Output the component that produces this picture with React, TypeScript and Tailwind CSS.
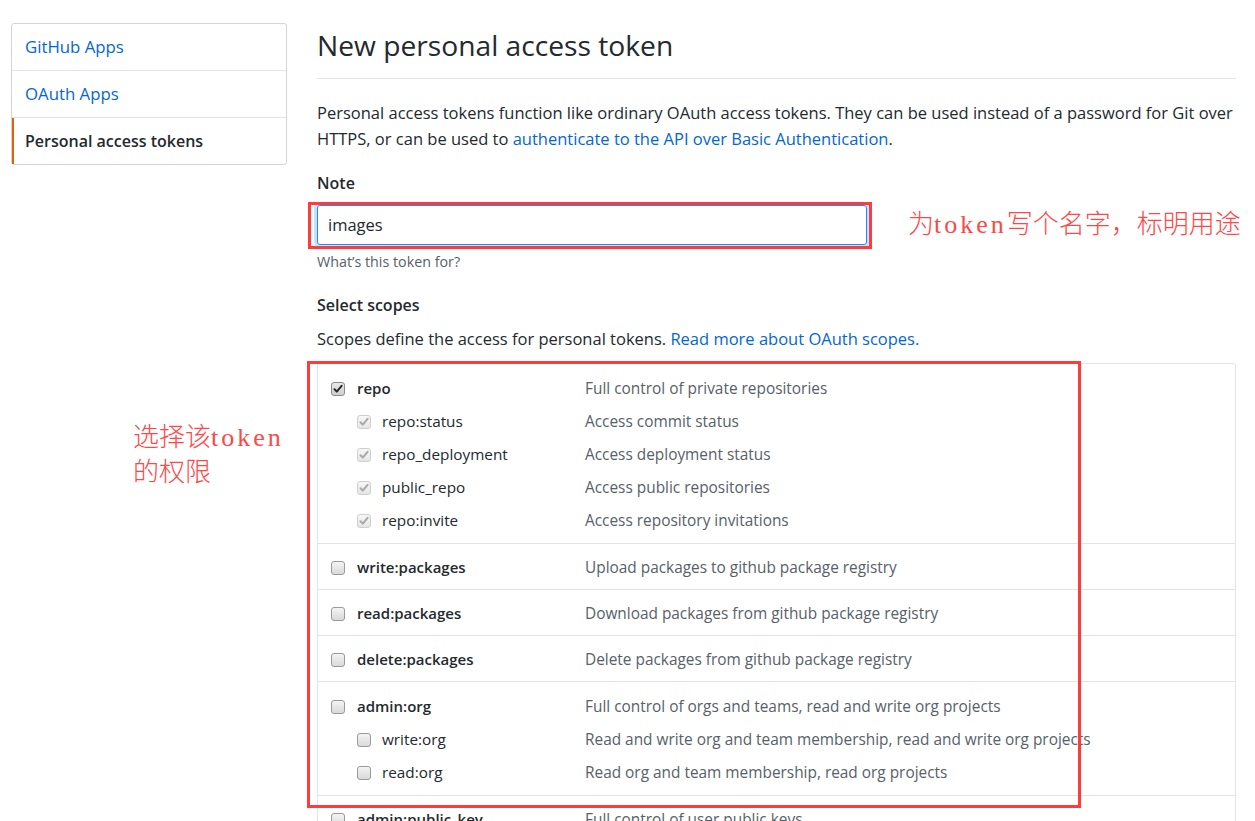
import React from "react";

type Item = { name: string; desc: string; checked?: boolean; disabled?: boolean; sub?: boolean };
type Group = Item[];

const groups: Group[] = [
  [
    { name: "repo", desc: "Full control of private repositories", checked: true },
    { name: "repo:status", desc: "Access commit status", checked: true, disabled: true, sub: true },
    { name: "repo_deployment", desc: "Access deployment status", checked: true, disabled: true, sub: true },
    { name: "public_repo", desc: "Access public repositories", checked: true, disabled: true, sub: true },
    { name: "repo:invite", desc: "Access repository invitations", checked: true, disabled: true, sub: true },
  ],
  [{ name: "write:packages", desc: "Upload packages to github package registry" }],
  [{ name: "read:packages", desc: "Download packages from github package registry" }],
  [{ name: "delete:packages", desc: "Delete packages from github package registry" }],
  [
    { name: "admin:org", desc: "Full control of orgs and teams, read and write org projects" },
    { name: "write:org", desc: "Read and write org and team membership, read and write org projects", sub: true },
    { name: "read:org", desc: "Read org and team membership, read org projects", sub: true },
  ],
  [{ name: "admin:public_key", desc: "Full control of user public keys" }],
];

function Checkbox({ checked, disabled }: { checked?: boolean; disabled?: boolean }) {
  return (
    <span
      className={
        "relative inline-flex h-[14px] w-[14px] shrink-0 items-center justify-center rounded-[3px] border " +
        (disabled
          ? "border-[#cfcfcf] bg-gradient-to-b from-[#f7f7f7] to-[#e6e6e6]"
          : checked
          ? "border-[#8a8a8a] bg-gradient-to-b from-[#e8e8e8] to-[#cfcfcf]"
          : "border-[#9a9a9a] bg-gradient-to-b from-[#f4f4f4] to-[#d9d9d9]")
      }
    >
      {checked && (
        <svg width="10" height="10" viewBox="0 0 10 10">
          <path
            d="M1.5 5.2 L3.8 7.6 L8.6 1.8"
            fill="none"
            stroke={disabled ? "#a9a9a9" : "#2b2b2b"}
            strokeWidth="2"
            strokeLinecap="round"
            strokeLinejoin="round"
          />
        </svg>
      )}
    </span>
  );
}

export default function App() {
  return (
    <div className="relative h-[821px] w-[1255px] overflow-hidden bg-white font-['Open_Sans',sans-serif] text-[#24292e]">
      <div className="flex">
        {/* Sidebar */}
        <nav className="ml-[11px] mt-[23px] w-[276px] self-start rounded-[3px] border border-[#d1d5da]">
          <div className="flex h-[47px] items-center border-b border-[#e1e4e8] pl-[13px] text-[16.8px] text-[#0366d6]">GitHub Apps</div>
          <div className="flex h-[47px] items-center border-b border-[#e1e4e8] pl-[13px] text-[16.8px] text-[#0366d6]">OAuth Apps</div>
          <div className="flex h-[46px] items-center border-l-2 border-[#e36209] pl-[11px] text-[16px] font-semibold">Personal access tokens</div>
        </nav>

        {/* Main */}
        <main className="ml-[30px] w-[919px]">
          <h1 className="mt-[26px] border-b border-[#e1e4e8] pb-[14px] text-[28.2px] font-normal leading-[38px]">New personal access token</h1>
          <p className="mt-[21px] whitespace-nowrap text-[16.5px] leading-[26px]">
            Personal access tokens function like ordinary OAuth access tokens. They can be used instead of a password for Git over
            <br />
            HTTPS, or can be used to <span className="text-[#0366d6]">authenticate to the API over Basic Authentication</span>.
          </p>

          <div className="mt-[18px] text-[16px] font-semibold leading-[26px]">Note</div>
          <div className="mt-[9px] w-[550px] rounded-[3px] shadow-[0_0_0_3px_#c8e1ff]">
            <div className="flex h-[40px] items-center rounded-[3px] border border-[#2188ff] pl-[10px] text-[16.5px]">images</div>
          </div>
          <div className="mt-[7px] text-[14.3px] leading-[20px] text-[#586069]">What’s this token for?</div>

          <div className="mt-[20px] text-[16px] font-semibold leading-[26px]">Select scopes</div>
          <p className="mt-[8px] text-[16.5px] leading-[26px]">
            Scopes define the access for personal tokens. <span className="text-[#0366d6]">Read more about OAuth scopes.</span>
          </p>

          <div className="mt-[11px] rounded-t-[3px] border border-[#e1e4e8]">
            {groups.map((g, gi) => (
              <div
                key={gi}
                className={
                  "pl-[13px] " +
                  (gi === 0 ? "pt-[8px] pb-[6px] " : gi === 4 ? "pt-[8px] pb-[6px] " : "pt-[7px] pb-[5px] ") +
                  (gi > 0 ? "border-t border-[#e1e4e8]" : "")
                }
              >
                {g.map((it) => (
                  <div key={it.name} className="flex h-[33px] items-center">
                    <div className={"flex w-[254px] shrink-0 items-center " + (it.sub ? "pl-[26px]" : "")}>
                      <Checkbox checked={it.checked} disabled={it.disabled} />
                      <span className={it.sub ? "ml-[11px] text-[15.3px]" : "ml-[12px] text-[15px] font-semibold"}>{it.name}</span>
                    </div>
                    <div className="whitespace-nowrap text-[15.4px] text-[#586069]">{it.desc}</div>
                  </div>
                ))}
              </div>
            ))}
          </div>
        </main>
      </div>

      {/* Annotations overlay */}
      <div className="pointer-events-none absolute left-[308px] top-[202px] h-[47px] w-[564px] border-[3px] border-[#ff3b3b]" />
      <div className="pointer-events-none absolute left-[307px] top-[361px] h-[447px] w-[774px] border-[3px] border-[#ff3b3b]" />
      <div className="absolute left-[908px] top-[205px] whitespace-nowrap font-['Noto_Sans_CJK_SC',sans-serif] text-[26px] font-light leading-[34px] text-[#ff4747]">
        为<span className="font-['Liberation_Serif',serif] tracking-[3px]">token</span>写个名字，标明用途
      </div>
      <div className="absolute left-[133px] top-[419px] font-['Noto_Sans_CJK_SC',sans-serif] text-[26px] font-light leading-[32px] text-[#ff4747]">
        选择该<span className="font-['Liberation_Serif',serif] tracking-[3px]">token</span>
        <br />
        的权限
      </div>
    </div>
  );
}
